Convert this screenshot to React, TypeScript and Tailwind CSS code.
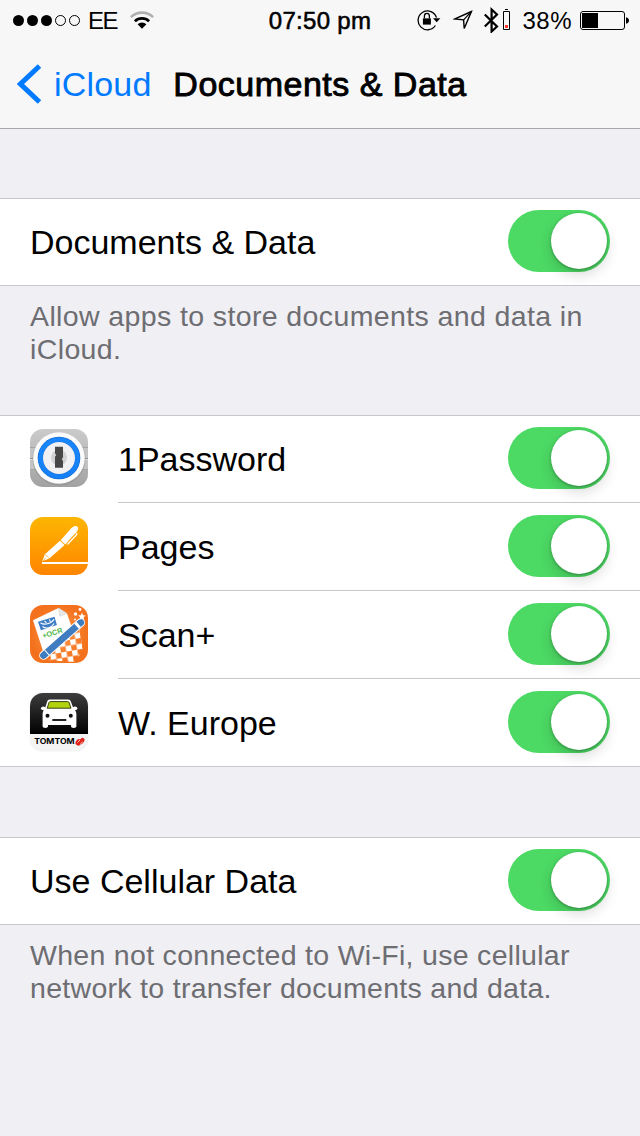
import type { ReactNode } from 'react';

function Toggle() {
  return (
    <div className="mt-3 mr-[30px] flex h-[62px] w-[102px] shrink-0 items-center justify-end rounded-full bg-[#4cd964] pr-[3px]">
      <div className="size-14 rounded-full bg-white shadow-[0_6px_14px_rgba(0,0,0,0.15),0_1px_3px_rgba(0,0,0,0.3)]" />
    </div>
  );
}

function SignalDots() {
  return (
    <svg width="68" height="12" viewBox="0 0 68 12">
      <circle cx="5.5" cy="6.5" r="5.5" />
      <circle cx="19.5" cy="6.5" r="5.5" />
      <circle cx="33.5" cy="6.5" r="5.5" />
      <circle cx="47.5" cy="6.5" r="5" fill="none" stroke="#000" />
      <circle cx="61.5" cy="6.5" r="5" fill="none" stroke="#000" />
    </svg>
  );
}

function Wifi() {
  return (
    <svg width="24" height="18" viewBox="0 0 24 18" fill="none">
      <path d="M0.9 6.1a16 16 0 0 1 22.2 0" stroke="#b0b0b0" strokeWidth="2.6" />
      <path d="M4.9 10.2a10.2 10.2 0 0 1 14.2 0" stroke="#000" strokeWidth="2.8" />
      <path d="M12 17.8l-4.4-4.5a6.3 6.3 0 0 1 8.8 0z" fill="#000" />
    </svg>
  );
}

function RotationLock() {
  return (
    <svg width="24" height="22" viewBox="0 0 24 22" fill="none">
      <path d="M18.4 16.5A9.4 9.4 0 1 1 19.5 8.6" stroke="#000" strokeWidth="1.3" />
      <path d="M16 9.3h7.4l-3.7 4z" fill="#000" />
      <path d="M5.9 9.4h8v6.2h-8z" fill="#000" />
      <path d="M7.4 9.6V7.2a2.5 2.8 0 0 1 5 0v2.4" stroke="#000" strokeWidth="1.3" />
    </svg>
  );
}

function LocationArrow() {
  return (
    <svg width="20" height="20" viewBox="0 0 20 20" fill="none">
      <path d="M18.4 1.5L2 8.900l8.600.9.6 8.700z" stroke="#000" strokeWidth="1.400" />
      <path d="M10.600 9.800L18.400 1.500" stroke="#000" strokeWidth="1.100" />
    </svg>
  );
}

function Bluetooth() {
  return (
    <svg width="26" height="26" viewBox="0 0 26 26" fill="none">
      <path d="M0.800 7.500l12.200 12-5.400 5V2.500L13 7.500 0.800 19.500" stroke="#000" strokeWidth="2.200" />
      <path d="M19.500 4.500h6v18h-6z" stroke="#000" />
      <path d="M21 2h3v1h-3z" fill="#000" />
      <path d="M21 18h3v3h-3z" fill="#ff3b30" />
    </svg>
  );
}

function Battery() {
  return (
    <svg width="49" height="19" viewBox="0 0 49 19" fill="none">
      <rect x="0.5" y="0.5" width="44" height="18" rx="2.5" stroke="#000" />
      <path d="M2 2h16v15H2z" fill="#000" />
      <path d="M46 6.2c4 .8 4 5.800 0 6.600z" fill="#000" />
    </svg>
  );
}

function OnePasswordIcon() {
  return (
    <svg width="58" height="58" viewBox="0 0 58 58" className="rounded-[13px]">
      <defs>
        <linearGradient id="op-bg" x1="0" y1="0" x2="0" y2="1">
          <stop offset="0" stopColor="#cbcbcb" />
          <stop offset="1" stopColor="#a2a2a2" />
        </linearGradient>
        <linearGradient id="op-ring" x1="0" y1="0" x2="0" y2="1">
          <stop offset="0" stopColor="#1a86fb" />
          <stop offset="1" stopColor="#1580f5" />
        </linearGradient>
      </defs>
      <rect width="58" height="58" fill="url(#op-bg)" />
      <path d="M0 18.500h58M0 40.500h58" stroke="#a5a5a5" />
      <path d="M0 19h58v21H0z" fill="#c4c4c4" />
      <path d="M0 29.500h58" stroke="#8e8e8e" />
      <path d="M0 30.500h58" stroke="#e2e2e2" />
      <circle cx="29" cy="30" r="26.500" fill="#8e8e8e" opacity="0.5" />
      <circle cx="29" cy="29" r="25.800" fill="#fbfbfb" />
      <circle cx="29" cy="29" r="21.300" fill="#0f62c4" />
      <circle cx="29" cy="29" r="18.500" fill="none" stroke="url(#op-ring)" strokeWidth="4.600" />
      <circle cx="29" cy="29" r="16" fill="#f1f1f3" />
      <circle cx="29" cy="28.500" r="8" fill="#d2d2d4" />
      <path d="M25 17.700h8v10.700l-1.300 1.700 1.300 1.900v6.700h-8V27.800l1.300-1.700-1.300-1.600z" fill="#474747" />
    </svg>
  );
}

function PagesIcon() {
  return (
    <svg width="58" height="58" viewBox="0 0 58 58" className="rounded-[13px]">
      <defs>
        <linearGradient id="pg-bg" x1="0" y1="0" x2="0" y2="1">
          <stop offset="0" stopColor="#fdb602" />
          <stop offset="1" stopColor="#ff8400" />
        </linearGradient>
      </defs>
      <rect width="58" height="58" fill="url(#pg-bg)" />
      <path d="M12 45h46v2H12z" fill="#fff" />
      <path d="M12.300 44.300l2.600-7L30 23.800l4.600 4.200L19.300 41.600z" fill="#fff" />
      <path d="M30.700 23.200L41 11.600c2-2.200 4.800-3.400 6.300-2s.6 4.200-1.400 6.400L35.300 27.400z" fill="#fff" />
      <path d="M46.700 16L46.800 17.500 37.500 27.500" fill="none" stroke="#fff" strokeWidth="1.200" />
      <path d="M45.200 16.800L38.200 24.400" stroke="#fda002" strokeWidth="0.500" />
      <path d="M15.300 37.600l3.700 3.600M13 43.900l2.500-2.800" stroke="#fd9803" strokeWidth="0.700" />
    </svg>
  );
}

function ScanIcon() {
  return (
    <svg width="58" height="58" viewBox="0 0 58 58" className="rounded-[13px]">
      <defs>
        <radialGradient id="sc-bg">
          <stop offset="0" stopColor="#ff9a4f" />
          <stop offset="1" stopColor="#f3711c" />
        </radialGradient>
        <pattern id="sc-check" width="11" height="11" patternUnits="userSpaceOnUse" patternTransform="translate(38 24) rotate(-10)">
          <path d="M0 0h5.500v5.500H0zM5.500 5.500H11V11H5.500z" fill="#fff" />
        </pattern>
      </defs>
      <rect width="58" height="58" fill="url(#sc-bg)" />
      <path d="M38 25l11-3 4 24-9 11-27-2z" fill="url(#sc-check)" />
      <path d="M3 15.300L28.500 3l8.500 5.500 5.300 15.500-28 26z" fill="#fff" />
      <path d="M28.500 3l1.300 8.200L37 8.500z" fill="#e7e7e7" stroke="#cfcfcf" strokeWidth="0.500" />
      <path d="M8 16.800l16.500-5 2.400 8.200-16 5.200z" fill="#3d7cc4" />
      <path d="M10.500 17.700c3.500 2.800 11 1 13.500-3.500M12.500 21.500c3.600 2.800 9 1.400 11.600-3M14.500 15.800l2 2M19.500 14.300l.8 2.600" fill="none" stroke="#fff" strokeWidth="1.100" />
      <text x="13.200" y="33.500" transform="rotate(-17 13.200 33.500)" fontSize="7.400" fontWeight="700" fontFamily="Liberation Sans, sans-serif" fill="#4fb548">+OCR</text>
      <path d="M13.500 50.500L50.800 17.500" stroke="#fff" strokeWidth="8.600" strokeLinecap="round" />
      <path d="M13.500 50.500L50.800 17.500" stroke="#3f7cc0" strokeWidth="6.800" strokeLinecap="round" />
      <path d="M16.500 47.900l.8-.7M46.500 21.300l2.200-1.900" stroke="#fff" strokeWidth="6.800" />
      <path d="M52 7.500l1 2.800 2.800.2-2.200 1.800.7 2.800-2.400-1.600-2.500 1.400.8-2.700-2.100-1.900 2.800-.1z" fill="#fff" />
      <circle cx="45.500" cy="9" r="1.700" fill="#fff" />
      <circle cx="50" cy="4.500" r="1.400" fill="#fff" />
      <circle cx="45" cy="14.500" r="1" fill="#fff" />
    </svg>
  );
}

function TomTomIcon() {
  return (
    <svg width="58" height="58" viewBox="0 0 58 58" className="rounded-[13px] shadow-[0_0_1px_#bbb]">
      <defs>
        <linearGradient id="tt-bg" x1="0" y1="0" x2="0" y2="1">
          <stop offset="0" stopColor="#3d3d3d" />
          <stop offset="1" stopColor="#000" />
        </linearGradient>
      </defs>
      <rect width="58" height="58" fill="#f4f4f4" />
      <rect width="58" height="41" fill="url(#tt-bg)" />
      <path d="M19.500 6.500h18.500c1.500 0 2.400.8 2.900 2.300l2.600 6.700c2 1.500 2.900 3.500 2.900 6v11.800c0 2.200-5.400 2.200-5.400 0V32H18v1.300c0 2.200-5.400 2.200-5.400 0V21.500c0-2.500.8-4.500 2.300-6l2.200-6.700c.5-1.500 1.300-2.300 2.400-2.300z" fill="#fff" />
      <path d="M20.400 8.600h17.200c.9 0 1.300.4 1.600 1.200l1.800 5.400H17.200L18.900 9.800c.3-.8.700-1.200 1.500-1.200z" fill="#b3d10c" stroke="#26300a" strokeWidth="0.900" />
      <ellipse cx="13.300" cy="15.300" rx="2.300" ry="1.900" fill="#fff" />
      <ellipse cx="45" cy="15.300" rx="2.300" ry="1.900" fill="#fff" />
      <circle cx="17.500" cy="22.800" r="2" fill="#111" />
      <circle cx="40.800" cy="22.800" r="2" fill="#111" />
      <path d="M22.300 27h14" stroke="#222" strokeWidth="1.900" />
      <text x="4.200" y="51.300" fontSize="7" fontWeight="700" textLength="40.500" lengthAdjust="spacingAndGlyphs" fontFamily="Inter, Liberation Sans, sans-serif" fill="#000">TOMTOM</text>
      <ellipse cx="48.600" cy="49.300" rx="2.900" ry="3.300" fill="#e2231a" transform="rotate(35 48.600 49.300)" />
      <ellipse cx="51.800" cy="48" rx="2.200" ry="3.400" fill="#e2231a" transform="rotate(35 51.800 48)" />
      <path d="M47.500 49.500l2.500-2.500M50.500 51l2.200-2.500" stroke="#fff" strokeWidth="0.700" />
    </svg>
  );
}

const apps: { name: string; icon: ReactNode }[] = [
  { name: '1Password', icon: <OnePasswordIcon /> },
  { name: 'Pages', icon: <PagesIcon /> },
  { name: 'Scan+', icon: <ScanIcon /> },
  { name: 'W. Europe', icon: <TomTomIcon /> },
];

function SettingRow({ label }: { label: string }) {
  return (
    <section className="flex h-[88px] justify-between border-y border-[#c8c7cc] bg-white pl-[30px]">
      <div className="pt-[23px] text-[34px] leading-10">{label}</div>
      <div className="-mt-px"><Toggle /></div>
    </section>
  );
}

export default function App() {
  return (
    <div className="flex h-[1136px] w-[640px] flex-col overflow-hidden bg-[#efeff4] font-['Liberation_Sans',Arial,sans-serif] text-black">
      <header className="h-[129px] border-b border-[#a7a7aa] bg-[#f7f7f7]">
        <div className="flex h-10 items-center text-2xl">
          <div className="flex flex-1 items-center">
            <span className="ml-[13px]"><SignalDots /></span>
            <span className="ml-[7px] w-[35px] pt-px tracking-[-1.5px]">EE</span>
            <span className="ml-[7px]"><Wifi /></span>
          </div>
          <div className="mt-px tracking-[0.3px] [-webkit-text-stroke:0.55px_black]">07:50 pm</div>
          <div className="flex flex-1 items-center justify-end">
            <RotationLock />
            <span className="ml-3"><LocationArrow /></span>
            <span className="ml-[11px]"><Bluetooth /></span>
            <span className="ml-3 pt-px tracking-[0.5px]">38%</span>
            <span className="mr-[11px] ml-2"><Battery /></span>
          </div>
        </div>
        <nav className="flex h-[88px] items-center text-[34px]">
          <div className="flex flex-1 items-center text-[#007aff]">
            <svg width="25" height="40" viewBox="0 0 25 40" fill="none" className="ml-[17px]">
              <path d="M22.500 2L3.500 20l19 18" stroke="currentColor" strokeWidth="5" />
            </svg>
            <span className="ml-3 tracking-[0.2px]">iCloud</span>
          </div>
          <h1 className="tracking-[0.5px] [-webkit-text-stroke:0.9px_black]">Documents &amp; Data</h1>
          <div className="flex-1" />
        </nav>
      </header>

      <main className="flex flex-col pt-[69px]">
        <SettingRow label="Documents &amp; Data" />
        <p className="h-[129px] px-[30px] pt-3.5 text-[28.5px] leading-[33px] tracking-[0.38px] text-[#6d6d72]">
          Allow apps to store documents and data in iCloud.
        </p>

        <section className="bg-white shadow-[inset_0_1px_0_#c8c7cc]">
          {apps.map((app) => (
            <div key={app.name} className="group flex h-[88px] pl-[30px] last:border-b last:border-[#c8c7cc]">
              <div className="mt-3.5 size-[58px] shrink-0">{app.icon}</div>
              <div className="ml-[30px] flex flex-1 justify-between border-b border-[#c8c7cc] group-last:border-b-0">
                <div className="pt-6 text-[34px] leading-10">{app.name}</div>
                <Toggle />
              </div>
            </div>
          ))}
        </section>

        <div className="pt-[70px]">
          <SettingRow label="Use Cellular Data" />
        </div>
        <p className="px-[30px] pt-3.5 text-[28.5px] leading-[33px] tracking-[0.3px] text-[#6d6d72]">
          When not connected to Wi-Fi, use cellular network to transfer documents and data.
        </p>
      </main>
    </div>
  );
}
